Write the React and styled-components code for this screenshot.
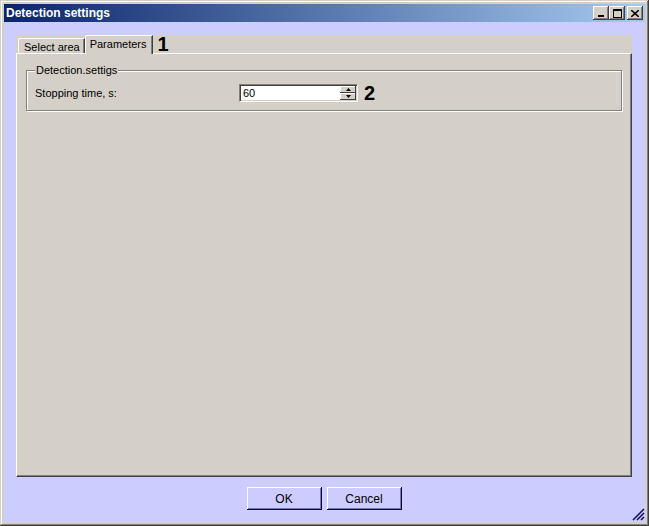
import React from 'react';
import styled, { createGlobalStyle } from 'styled-components';

const GlobalStyle = createGlobalStyle`
  html, body {
    margin: 0;
    padding: 0;
    background: #ffffff;
  }
  body {
    font-family: "Liberation Sans", Arial, sans-serif;
    font-size: 11px;
    color: #000;
  }
`;

const Window = styled.div`
  width: 649px;
  height: 526px;
  box-sizing: border-box;
  padding: 4px;
  background: #d4d0c8;
  box-shadow: inset -1px -1px #404040, inset 1px 1px #d4d0c8,
    inset -2px -2px #808080, inset 2px 2px #ffffff;
  display: flex;
  flex-direction: column;
`;

const TitleBar = styled.div`
  height: 18px;
  flex: none;
  display: flex;
  align-items: center;
  padding: 0 2px 0 2px;
  background: linear-gradient(to right, #0a246a, #a6caf0);
`;

const Title = styled.div`
  flex: 1;
  color: #fff;
  font-weight: bold;
  font-size: 12px;
  line-height: 18px;
`;

const Caption = styled.div`
  display: flex;
`;

const CaptionButton = styled.div`
  width: 16px;
  height: 14px;
  margin-left: ${({ $gap }) => $gap}px;
  background: #d4d0c8;
  box-shadow: inset -1px -1px #404040, inset 1px 1px #ffffff,
    inset -2px -2px #808080, inset 2px 2px #d4d0c8;
  display: flex;
  align-items: center;
  justify-content: center;
`;

const Body = styled.div`
  flex: 1;
  position: relative;
  background: #ccccff;
  display: flex;
  flex-direction: column;
  padding: 13px 13px 12px 12px;
`;

const TabControl = styled.div`
  flex: 1;
  display: flex;
  flex-direction: column;
  background: #d4d0c8;
`;

const TabRow = styled.div`
  height: 18px;
  flex: none;
  display: flex;
  align-items: flex-end;
  padding-left: 2px;
  position: relative;
  z-index: 1;
`;

const Tab = styled.div`
  height: ${({ $active }) => ($active ? 19 : 15)}px;
  margin-bottom: ${({ $active }) => ($active ? -1 : 0)}px;
  box-sizing: border-box;
  padding: ${({ $active }) => ($active ? '2px 5px 0 4px' : '2px 4px 0 5px')};
  background: #d4d0c8;
  border-top: 1px solid #ffffff;
  border-left: 1px solid #ffffff;
  border-right: 1px solid #404040;
  border-top-left-radius: 2px;
  box-shadow: inset -1px 0 #808080;
  line-height: 13px;
  white-space: nowrap;
`;

const Marker = styled.span`
  font-weight: bold;
  font-size: 20px;
  line-height: 18px;
  margin-left: ${({ $gap }) => $gap}px;
  align-self: center;
`;

const Panel = styled.div`
  flex: 1;
  border-top: 1px solid #ffffff;
  border-left: 1px solid #ffffff;
  border-right: 1px solid #404040;
  border-bottom: 1px solid #404040;
  box-shadow: inset -1px -1px #808080;
  padding: 10px 9px 0 9px;
`;

const Group = styled.fieldset`
  margin: 0;
  padding: 7px 8px 8px 8px;
  border: 1px solid #808080;
  box-shadow: inset 1px 1px #ffffff, 1px 1px #ffffff;
  min-inline-size: 0;
`;

const Legend = styled.legend`
  padding: 0 1px;
  margin-left: 0;
  line-height: 13px;
  background: #d4d0c8;
`;

const FieldRow = styled.div`
  display: grid;
  grid-template-columns: 204px 119px auto;
  align-items: center;
`;

const Label = styled.div`
  line-height: 13px;
`;

const Spin = styled.div`
  height: 18px;
  box-sizing: border-box;
  display: flex;
  background: #fff;
  border-top: 1px solid #808080;
  border-left: 1px solid #808080;
  border-right: 1px solid #ffffff;
  border-bottom: 1px solid #ffffff;
  box-shadow: inset 1px 1px #404040, inset -1px -1px #d4d0c8;
  padding: 2px 2px 2px 3px;
`;

const SpinText = styled.div`
  flex: 1;
  line-height: 12px;
  color: #000;
`;

const SpinButtons = styled.div`
  width: 16px;
  margin: -1px -1px -1px 0;
  display: flex;
  flex-direction: column;
`;

const SpinButton = styled.div`
  flex: 1;
  background: #d4d0c8;
  box-shadow: inset -1px -1px #404040, inset 1px 1px #ffffff;
  display: flex;
  align-items: center;
  justify-content: center;
`;

const Buttons = styled.div`
  flex: none;
  margin-top: 10px;
  display: flex;
  justify-content: center;
  gap: 5px;
`;

const Button = styled.div`
  width: 75px;
  height: 23px;
  box-sizing: border-box;
  background: #ccccff;
  box-shadow: inset -1px -1px #0a0a3a, inset 1px 1px #ffffff,
    inset -2px -2px #7a7aa8;
  display: flex;
  align-items: center;
  justify-content: center;
  font-size: 12px;
`;

const Grip = styled.svg`
  position: absolute;
  right: 0;
  bottom: 1px;
`;

const Tri = ({ up }) => (
  <svg width="5" height="3" viewBox="0 0 5 3">
    <path d={up ? 'M2.5 0 L5 3 L0 3 Z' : 'M0 0 L5 0 L2.5 3 Z'} fill="#000" />
  </svg>
);

const App = () => (
  <>
    <GlobalStyle />
    <Window>
      <TitleBar>
        <Title>Detection settings</Title>
        <Caption>
          <CaptionButton $gap={0}>
            <svg width="8" height="8" viewBox="0 0 8 8">
              <rect x="1" y="6" width="6" height="2" fill="#000" />
            </svg>
          </CaptionButton>
          <CaptionButton $gap={0}>
            <svg width="9" height="9" viewBox="0 0 9 9">
              <rect x="0.5" y="0.5" width="8" height="8" fill="none" stroke="#000" />
              <rect x="0" y="0" width="9" height="2" fill="#000" />
            </svg>
          </CaptionButton>
          <CaptionButton $gap={2}>
            <svg width="8" height="7" viewBox="0 0 8 7">
              <path d="M0 0 L8 7 M8 0 L0 7" stroke="#000" strokeWidth="1.6" />
            </svg>
          </CaptionButton>
        </Caption>
      </TitleBar>
      <Body>
        <TabControl>
          <TabRow>
            <Tab>Select area</Tab>
            <Tab $active>Parameters</Tab>
            <Marker $gap={5}>1</Marker>
          </TabRow>
          <Panel>
            <Group>
              <Legend>Detection.settigs</Legend>
              <FieldRow>
                <Label>Stopping time, s:</Label>
                <Spin>
                  <SpinText>60</SpinText>
                  <SpinButtons>
                    <SpinButton>
                      <Tri up />
                    </SpinButton>
                    <SpinButton>
                      <Tri />
                    </SpinButton>
                  </SpinButtons>
                </Spin>
                <Marker $gap={6}>2</Marker>
              </FieldRow>
            </Group>
          </Panel>
        </TabControl>
        <Buttons>
          <Button>OK</Button>
          <Button>Cancel</Button>
        </Buttons>
        <Grip width="13" height="13" viewBox="0 0 13 13">
          <path
            d="M12 1 L1 12 M12 5 L5 12 M12 9 L9 12"
            stroke="#0a0a6a"
            strokeWidth="1.5"
          />
        </Grip>
      </Body>
    </Window>
  </>
);

export default App;
